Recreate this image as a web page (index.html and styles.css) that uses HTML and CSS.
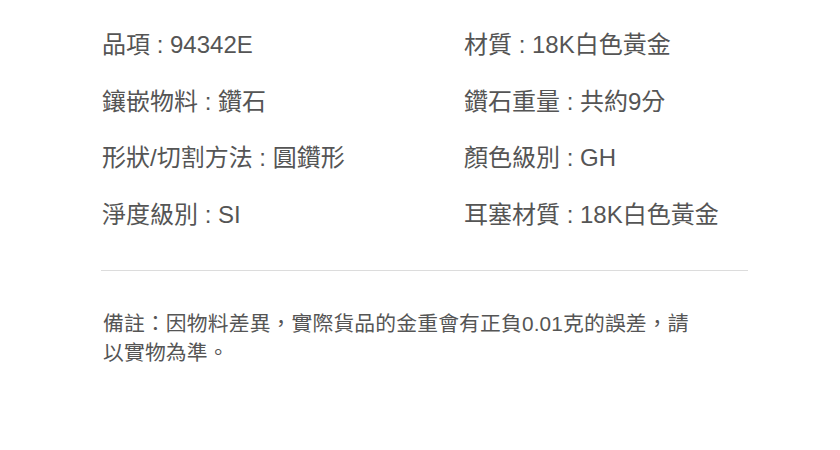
FILE: index.html
```html
<!DOCTYPE html>
<html lang="zh-Hant">
<head>
<meta charset="utf-8">
<link rel="stylesheet" href="styles.css">
</head>
<body>
<div class="spec">
  <div class="grid">
    <div class="item">品項 : 94342E</div>
    <div class="item">材質 : 18K白色黃金</div>
    <div class="item">鑲嵌物料 : 鑽石</div>
    <div class="item">鑽石重量 : 共約9分</div>
    <div class="item">形狀/切割方法 : 圓鑽形</div>
    <div class="item">顏色級別 : GH</div>
    <div class="item">淨度級別 : SI</div>
    <div class="item">耳塞材質 : 18K白色黃金</div>
  </div>
  <hr class="divider">
  <p class="note">備註：因物料差異，實際貨品的金重會有正負0.01克的誤差，請以實物為準。</p>
</div>
</body>
</html>
```
FILE: styles.css
```css
html, body {
  margin: 0;
  padding: 0;
  background: #fff;
}
body {
  font-family: "Liberation Sans", "Noto Sans CJK TC", sans-serif;
  color: #555;
}
.spec {
  width: 647px;
  margin-left: 101px;
  padding-top: 17px;
}
.grid {
  display: grid;
  grid-template-columns: 362px 1fr;
}
.item {
  font-size: 24px;
  line-height: 56.7px;
  height: 56.7px;
  white-space: nowrap;
  padding-left: 1px;
}
.divider {
  border: 0;
  border-top: 1px solid #dcdcdc;
  margin: 26px 0 0 0;
  height: 0;
}
.note {
  margin: 38px 0 0 0;
  width: 598px;
  padding-left: 2px;
  font-size: 20.8px;
  line-height: 29.5px;
  letter-spacing: 0.15px;
}
```
